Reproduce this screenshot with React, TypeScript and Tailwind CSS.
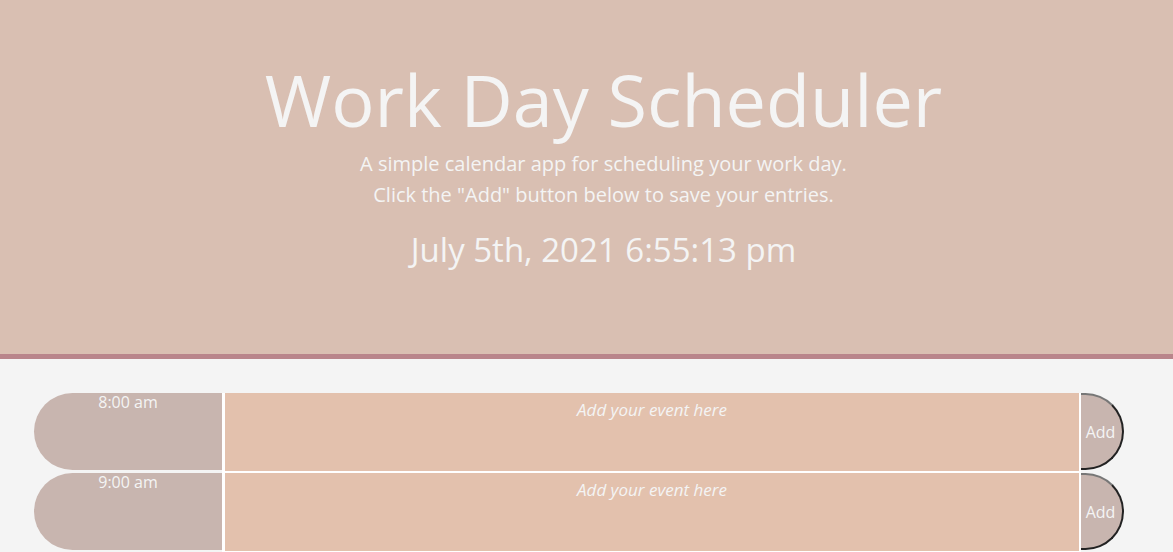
import { useState } from 'react';

const hours = ['8:00 am', '9:00 am'];

const TimeBlock = ({ hour }: { hour: string }) => {
  const [text, setText] = useState('');
  return (
    <div className="flex h-[80px] items-start">
      <div className="h-[77px] w-[188px] shrink-0 rounded-l-full bg-[#c8b5af] text-center text-[16px] leading-[18px] text-[#f4f4f4]">
        {hour}
      </div>
      <textarea
        value={text}
        onChange={(e) => setText(e.target.value)}
        placeholder="Add your event here"
        className="h-[80px] w-[859px] shrink-0 resize-none border-b-2 border-l-[3px] border-r-2 border-white bg-[#e3c1ad] pt-[6px] text-center text-[17px] italic leading-[22px] text-[#f4f4f4] outline-none placeholder:text-[#f4f4f4]"
      />
      <button className="h-[77px] w-[43px] shrink-0 rounded-r-full border-2 border-l-0 border-t-[#777] border-r-[#222] border-b-[#222] bg-[#c8b5af] pr-[2px] text-[16px] text-[#f4f4f4]">
        Add
      </button>
    </div>
  );
};

const App = () => {
  return (
    <div className="min-h-screen bg-[#f4f4f4] font-['Open_Sans',sans-serif]">
      <header className="flex h-[359px] flex-col items-center border-b-[5px] border-[#b9858b] bg-[#d9bfb2] pl-[34px] pt-[56px] text-center text-[#f4f4f4]">
        <h1 className="text-[72px] font-normal leading-[86px]">Work Day Scheduler</h1>
        <p className="mt-[6px] text-[20px] leading-[31px]">
          A simple calendar app for scheduling your work day.
          <br />
          Click the "Add" button below to save your entries.
        </p>
        <p className="mt-[20px] text-[33px] leading-[40px]">July 5th, 2021 6:55:13 pm</p>
      </header>
      <main className="pl-[34px] pt-[34px]">
        {hours.map((h) => (
          <TimeBlock key={h} hour={h} />
        ))}
      </main>
    </div>
  );
};

export default App;
